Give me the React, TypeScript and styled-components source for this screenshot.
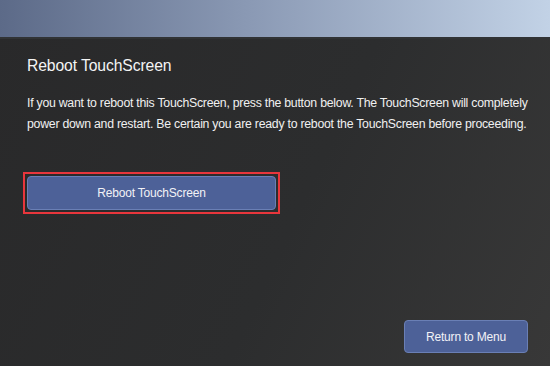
import React from "react";
import styled, { createGlobalStyle } from "styled-components";

const Global = createGlobalStyle`
  html, body { margin: 0; padding: 0; }
  body { font-family: "Liberation Sans", Arial, sans-serif; background: #2b2b2c; }
  * { box-sizing: border-box; }
`;

const Page = styled.div`
  width: 550px;
  height: 366px;
  display: flex;
  flex-direction: column;
  background: linear-gradient(115deg, #29292a 0%, #2c2d2e 55%, #383838 100%);
  overflow: hidden;
`;

const Header = styled.div`
  height: 39px;
  flex-shrink: 0;
  background: linear-gradient(to right, #5c6a88 0%, #8a99b4 45%, #c2d2e6 100%);
  border-bottom: 2px solid #313335;
`;

const Content = styled.div`
  flex: 1;
  display: flex;
  flex-direction: column;
  padding: 18px 20px 13px 27px;
`;

const Title = styled.h1`
  margin: 0;
  font-size: 15.7px;
  font-weight: normal;
  line-height: 17px;
  color: #f4f4f4;
  letter-spacing: -0.1px;
`;

const Text = styled.p`
  margin: 19px 0 0;
  font-size: 12.3px;
  line-height: 21px;
  letter-spacing: -0.25px;
  color: #f0f0f0;
`;

const Highlight = styled.div`
  display: inline-flex;
  padding: 2px;
  border: 2px solid #e8363c;
`;

const PrimaryButton = styled.button<{ $width: number; $height: number }>`
  width: ${(p) => p.$width}px;
  height: ${(p) => p.$height}px;
  background: #4d6198;
  border: 1px solid #6a7fb5;
  border-radius: 4px;
  color: #f2f2f6;
  font-family: "Liberation Sans", Arial, sans-serif;
  font-size: 12px;
  letter-spacing: -0.2px;
  padding: 0;
`;

const RebootRow = styled.div`
  margin-top: 37px;
  margin-left: -4px;
  display: flex;
`;

const Footer = styled.div`
  margin-top: auto;
  margin-right: 2px;
  display: flex;
  justify-content: flex-end;
`;

export default function App() {
  return (
    <>
      <Global />
      <Page>
        <Header />
        <Content>
          <Title>Reboot TouchScreen</Title>
          <Text>
            If you want to reboot this TouchScreen, press the button below. The TouchScreen will completely
            power down and restart. Be certain you are ready to reboot the TouchScreen before proceeding.
          </Text>
          <RebootRow>
            <Highlight>
              <PrimaryButton $width={249} $height={34}>
                Reboot TouchScreen
              </PrimaryButton>
            </Highlight>
          </RebootRow>
          <Footer>
            <PrimaryButton $width={124} $height={33}>
              Return to Menu
            </PrimaryButton>
          </Footer>
        </Content>
      </Page>
    </>
  );
}
